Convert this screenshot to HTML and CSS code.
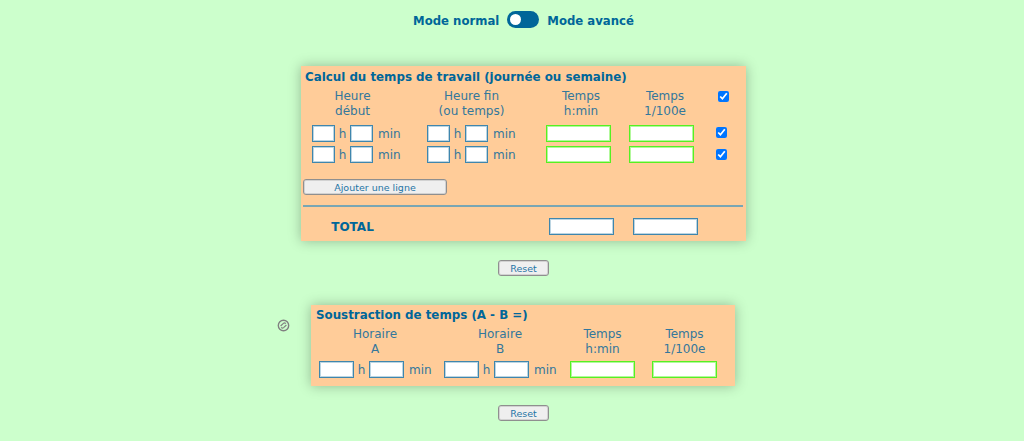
FILE: index.html
```html
<!DOCTYPE html>
<html lang="fr">
<head>
    <meta charset="UTF-8">
    <meta name="viewport" content="width=device-width, initial-scale=1.0">
    <title>Calcul du temps de travail</title>
    <link rel="stylesheet" href="styles.css">
</head>
<body>
    <div class="mode-bar">
        <span class="mode-label">Mode normal</span>
        <span class="switch"><span class="knob"></span></span>
        <span class="mode-label">Mode avancé</span>
    </div>

    <div class="panel panel-work">
        <h2>Calcul du temps de travail (journée ou semaine)</h2>
        <div class="heads heads-work">
            <div>Heure<br>début</div>
            <div>Heure fin<br>(ou temps)</div>
            <div>Temps<br>h:min</div>
            <div>Temps<br>1/100e</div>
            <div class="check-cell"><input type="checkbox" checked></div>
        </div>
        <div class="work-row">
            <div class="clock">
                <input type="text" class="small"><span class="h">h</span><input type="text" class="small"><span class="m">min</span>
            </div>
            <div class="clock">
                <input type="text" class="small"><span class="h">h</span><input type="text" class="small"><span class="m">min</span>
            </div>
            <input type="text" class="result">
            <input type="text" class="result">
            <input type="checkbox" checked>
        </div>
        <div class="work-row">
            <div class="clock">
                <input type="text" class="small"><span class="h">h</span><input type="text" class="small"><span class="m">min</span>
            </div>
            <div class="clock">
                <input type="text" class="small"><span class="h">h</span><input type="text" class="small"><span class="m">min</span>
            </div>
            <input type="text" class="result">
            <input type="text" class="result">
            <input type="checkbox" checked>
        </div>
        <button class="btn add-line">Ajouter une ligne</button>
        <div class="rule"></div>
        <div class="heads-work total-row">
            <div class="total-label">TOTAL</div>
            <div></div>
            <div><input type="text" class="total"></div>
            <div><input type="text" class="total"></div>
        </div>
    </div>

    <div class="reset-wrap"><button class="btn reset">Reset</button></div>

    <div class="sub-section">
        <svg class="sub-icon" width="13" height="13" viewBox="0 0 13 13" fill="none" stroke="#808080">
            <circle cx="6.5" cy="6.5" r="5.2" stroke-width="1.4"/>
            <path d="M3.6 7 L6.4 4.4 Q7.6 3.4 8.8 4.6 M4.2 8.4 Q5.4 9.6 6.6 8.6 L9.4 6" stroke-width="1.2"/>
        </svg>
        <div class="panel panel-sub">
            <h2>Soustraction de temps (A - B =)</h2>
            <div class="heads heads-sub">
                <div>Horaire<br>A</div>
                <div>Horaire<br>B</div>
                <div>Temps<br>h:min</div>
                <div>Temps<br>1/100e</div>
            </div>
            <div class="heads-sub sub-row">
                <div class="clock clock-wide">
                    <input type="text" class="wide"><span class="h">h</span><input type="text" class="wide"><span class="m">min</span>
                </div>
                <div class="clock clock-wide">
                    <input type="text" class="wide"><span class="h">h</span><input type="text" class="wide"><span class="m">min</span>
                </div>
                <div><input type="text" class="result"></div>
                <div><input type="text" class="result"></div>
            </div>
        </div>
        <div></div>
    </div>

    <div class="reset-wrap"><button class="btn reset">Reset</button></div>
</body>
</html>
```

FILE: styles.css
```css
body {
    margin: 0;
    padding: 11px 0 0 23px;
    background: #ccffcc;
    color: #33779c;
    font-family: "DejaVu Sans", Verdana, sans-serif;
    font-size: 12px;
    overflow: hidden;
}

.mode-bar {
    display: flex;
    justify-content: center;
    align-items: center;
    gap: 8px;
    height: 17px;
    color: #006699;
    font-size: 11.7px;
    font-weight: bold;
}

.mode-label {
    padding-top: 2px;
}

.switch {
    display: block;
    width: 32px;
    height: 17px;
    padding: 3px;
    box-sizing: border-box;
    border-radius: 9px;
    background: #006699;
}

.knob {
    display: block;
    width: 11px;
    height: 11px;
    border-radius: 50%;
    background: #ffffff;
}

.panel {
    background: #ffcc99;
    box-shadow: 0 0 12px rgba(0, 0, 0, 0.28);
    box-sizing: border-box;
}

.panel h2 {
    margin: 0;
    color: #006699;
    font-size: 11.85px;
    font-weight: bold;
    line-height: 16px;
}

.panel-work {
    width: 445px;
    height: 175px;
    margin: 38px auto 0;
    padding: 3px 3px 0 2px;
}

.panel-work h2 {
    margin-left: 2px;
}

.heads {
    text-align: center;
    line-height: 14.5px;
}

.heads-work {
    display: grid;
    grid-template-columns: 95px 143px 76px 92px 24px;
    margin-left: 2px;
    text-align: center;
}

.panel-work .heads {
    margin-top: 4px;
}

input[type="checkbox"] {
    margin: 0;
    width: 11px;
    height: 11px;
}

.check-cell input {
    margin-top: 2px;
}

input[type="text"] {
    box-sizing: border-box;
    height: 17px;
    margin: 0;
    padding: 0;
    background: #ffffff;
    border: 1px solid #3f86ad;
    box-shadow: inset 0 0 0 1px rgba(63, 134, 173, 0.35);
    flex: none;
}

.small { width: 23px; }
.wide { width: 35px; }
.total { width: 65px; }

input.result {
    width: 65px;
    border-color: #55f022;
    box-shadow: inset 0 0 0 1px rgba(85, 240, 34, 0.45);
}

.clock {
    display: flex;
    align-items: center;
    flex: none;
    width: 88px;
}

.clock .h {
    flex: none;
    width: 15px;
    text-align: center;
}

.clock .m {
    flex: none;
    margin-left: 5px;
}

.work-row {
    display: flex;
    align-items: center;
    height: 17px;
    margin-top: 4px;
    padding-left: 9px;
}

.heads + .work-row {
    margin-top: 7px;
}

.heads + .work-row input[type="checkbox"] {
    margin-top: -2px;
}

.work-row .clock {
    margin-right: 27px;
}

.work-row .clock + .result {
    margin-left: 4px;
}

.work-row .result {
    margin-right: 18px;
}

.work-row .result + input[type="checkbox"] {
    margin-left: 4px;
}

.btn {
    display: block;
    box-sizing: border-box;
    height: 16px;
    padding: 0;
    background: #efefef;
    border: 1px solid #8f8f8f;
    border-radius: 3px;
    box-shadow: inset 0 0 0 1px rgba(143, 143, 143, 0.3);
    color: #1f75a5;
    font-family: "DejaVu Sans", Verdana, sans-serif;
    font-size: 9.5px;
}

.add-line {
    width: 144px;
    margin: 16px 0 0;
}

.rule {
    height: 2px;
    margin: 10px 0 0;
    background: #78a6b4;
}

.total-row {
    margin-top: 11px;
    height: 17px;
    align-items: center;
}

.total-label {
    color: #006699;
    font-size: 12px;
    font-weight: bold;
}

.reset-wrap {
    display: flex;
    justify-content: center;
    margin-top: 19px;
}

.reset {
    width: 51px;
}

.sub-section {
    display: grid;
    grid-template-columns: 1fr auto 1fr;
    margin-top: 29px;
}

.sub-icon {
    justify-self: end;
    margin: 14px 22px 0 0;
}

.panel-sub {
    width: 424px;
    height: 81px;
    margin-left: -1px;
    padding: 2px 5px 0;
}

.heads-sub {
    display: grid;
    grid-template-columns: 118px 132px 73px 91px;
    text-align: center;
}

.panel-sub .heads {
    margin-top: 4px;
}

.sub-row {
    height: 17px;
    margin-top: 5px;
    justify-items: center;
    align-items: center;
}

.clock-wide {
    width: 112px;
}
```
